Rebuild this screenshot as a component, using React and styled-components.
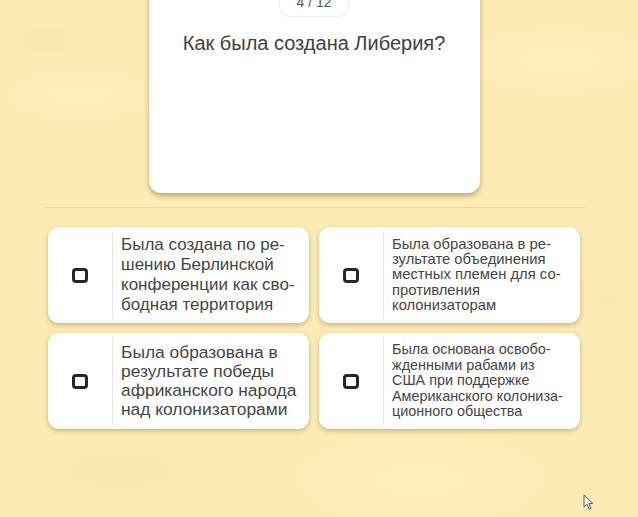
import React from "react";
import styled, { createGlobalStyle } from "styled-components";

const GlobalStyle = createGlobalStyle`
  html, body {
    margin: 0;
    padding: 0;
  }
  body {
    background-color: #fcecb3;
    font-family: "Liberation Sans", Arial, sans-serif;
  }
`;

//page + paper texture
const Page = styled.div`
  position: relative;
  width: 638px;
  height: 517px;
  overflow: hidden;
  box-sizing: border-box;
  padding-right: 10px;
  display: flex;
  flex-direction: column;
  align-items: center;
  background-color: #fcecb3;
  background-image:
    radial-gradient(ellipse 50px 20px at 45px 40px, rgba(242, 218, 158, 0.3), transparent),
    radial-gradient(ellipse 90px 30px at 80px 95px, rgba(255, 244, 205, 0.35), transparent),
    radial-gradient(ellipse 120px 40px at 560px 60px, rgba(255, 244, 205, 0.35), transparent),
    radial-gradient(ellipse 110px 35px at 120px 470px, rgba(245, 222, 160, 0.3), transparent),
    radial-gradient(ellipse 160px 60px at 420px 480px, rgba(255, 244, 200, 0.35), transparent),
    radial-gradient(ellipse 90px 40px at 610px 300px, rgba(245, 224, 165, 0.25), transparent);
`;

const Content = styled.div`
  width: 542px;
  display: flex;
  flex-direction: column;
  align-items: center;
`;

//question card
const QuestionCard = styled.div`
  width: 331px;
  height: 213px;
  margin-top: -20px;
  box-sizing: border-box;
  padding-top: 6px;
  background: #ffffff;
  border-radius: 12px;
  box-shadow: 0 3px 5px rgba(90, 70, 20, 0.4);
  display: flex;
  flex-direction: column;
  align-items: center;
`;

const Counter = styled.div`
  width: 70px;
  height: 31px;
  box-sizing: border-box;
  border: 1px solid #ececec;
  border-radius: 11px;
  display: flex;
  align-items: center;
  justify-content: center;
  font-size: 14px;
  color: #555555;
`;

const QuestionText = styled.div`
  margin-top: 14px;
  font-size: 20px;
  line-height: 24px;
  color: #404040;
  text-align: center;
`;

const Divider = styled.div`
  align-self: stretch;
  height: 1px;
  margin-top: 14px;
  background: #eadb9f;
`;

//answers
const AnswerGrid = styled.div`
  align-self: stretch;
  margin-top: 19px;
  padding: 0 5px;
  display: grid;
  grid-template-columns: 1fr 1fr;
  gap: 10px 10px;
`;

const AnswerCard = styled.div`
  height: 96px;
  display: flex;
  background: #ffffff;
  border-radius: 11px;
  box-shadow: 0 2px 5px rgba(90, 70, 20, 0.32);
  cursor: pointer;
`;

const CheckCell = styled.div`
  width: 64px;
  flex-shrink: 0;
  margin: 4px 0;
  border-right: 1px solid #e6e6e6;
  display: flex;
  align-items: center;
  justify-content: center;
`;

const CheckBox = styled.div`
  width: 16px;
  height: 15px;
  box-sizing: border-box;
  border: 3px solid #262626;
  border-radius: 4px;
`;

const AnswerText = styled.div`
  align-self: center;
  padding: 0 8px;
  white-space: pre-line;
  color: #454545;
  font-size: ${(p) => p.size}px;
  line-height: ${(p) => p.lh}px;
`;

const Cursor = styled.svg`
  position: absolute;
  left: 583px;
  top: 494px;
`;

const answers = [
  {
    id: "a1",
    size: 17,
    lh: 20,
    text: "Была создана по ре-\nшению Берлинской\nконференции как сво-\nбодная территория",
  },
  {
    id: "a2",
    size: 14.8,
    lh: 15.3,
    text: "Была образована в ре-\nзультате объединения\nместных племен для со-\nпротивления\nколонизаторам",
  },
  {
    id: "a3",
    size: 17.4,
    lh: 19,
    text: "Была образована в\nрезультате победы\nафриканского народа\nнад колонизаторами",
  },
  {
    id: "a4",
    size: 14.4,
    lh: 15.6,
    text: "Была основана освобо-\nжденными рабами из\nСША при поддержке\nАмериканского колониза-\nционного общества",
  },
];

function App() {
  return (
    <>
      <GlobalStyle />
      <Page>
        <Content>
          <QuestionCard>
            <Counter>4 / 12</Counter>
            <QuestionText>Как была создана Либерия?</QuestionText>
          </QuestionCard>

          <Divider />

          <AnswerGrid>
            {answers.map((a) => (
              <AnswerCard key={a.id}>
                <CheckCell>
                  <CheckBox />
                </CheckCell>
                <AnswerText size={a.size} lh={a.lh}>
                  {a.text}
                </AnswerText>
              </AnswerCard>
            ))}
          </AnswerGrid>
        </Content>

        <Cursor width="11" height="16" viewBox="0 0 11 16">
          <path
            d="M1 1 L1 13 L4 10.2 L6.2 15 L8 14.2 L5.9 9.6 L9.8 9.6 Z"
            fill="#ffffff"
            stroke="#555555"
            strokeWidth="1"
            strokeLinejoin="round"
          />
        </Cursor>
      </Page>
    </>
  );
}

export default App;
